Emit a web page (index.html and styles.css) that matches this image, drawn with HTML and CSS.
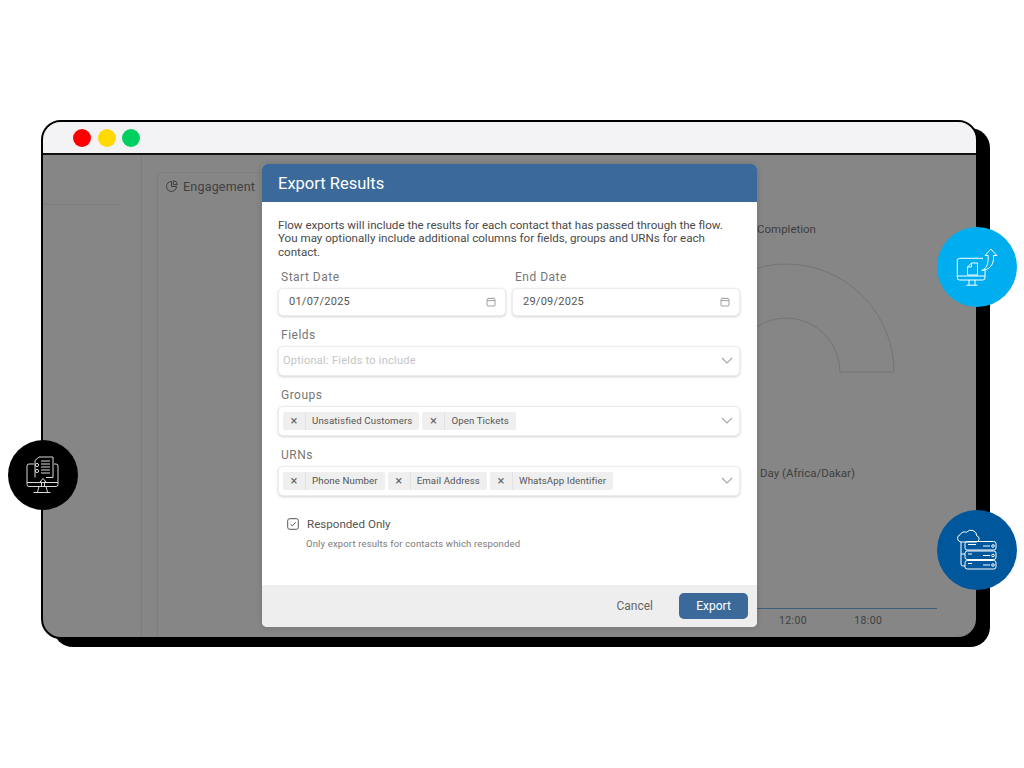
FILE: index.html
```html
<!DOCTYPE html>
<html lang="en">
<head>
<meta charset="UTF-8">
<meta name="viewport" content="width=device-width, initial-scale=1.0">
<title>Export Results</title>
<link rel="stylesheet" href="styles.css">
</head>
<body>
<div class="stage">
    <div class="window">
        <div class="titlebar">
            <span class="dot dot-red"></span>
            <span class="dot dot-yellow"></span>
            <span class="dot dot-green"></span>
        </div>
        <div class="screen">
            <div class="sidebar"><div class="sidebar-rule"></div></div>
            <div class="main">
                <div class="card">
                    <div class="tab">
                        <svg class="tab-icon" viewBox="0 0 12 12"><path d="M5.500 1.500a5 5 0 1 0 5 5h-5z"/><path d="M7.300 0.700a4.200 4.200 0 0 1 4 4h-4z"/></svg>
                        Engagement
                    </div>
                    <div class="chart">
                        <div class="chart-title">Completion</div>
                        <svg class="gauge" width="140" height="112" viewBox="0 0 140 112"><path d="M-79 111a108 108 0 0 1 216 0H83a54 54 0 0 0-108 0z"/></svg>
                        <div class="chart-sub">Day (Africa/Dakar)</div>
                        <div class="axis"></div>
                        <div class="ticks"><span>12:00</span><span>18:00</span></div>
                    </div>
                </div>
            </div>
        </div>
    </div>

    <div class="modal">
        <div class="modal-header">Export Results</div>
        <div class="modal-body">
            <p class="intro">Flow exports will include the results for each contact that has passed through the flow. You may optionally include additional columns for fields, groups and URNs for each contact.</p>
            <div class="date-row">
                <div class="field">
                    <label>Start Date</label>
                    <div class="control date-control">
                        <span>01/07/2025</span>
                        <svg class="cal" viewBox="0 0 10 10"><rect x="1" y="1.5" width="8" height="7.5" rx="1"/><path d="M1 3.6h8M3 .6v1.4M7 .6v1.4"/></svg>
                    </div>
                </div>
                <div class="field">
                    <label>End Date</label>
                    <div class="control date-control">
                        <span>29/09/2025</span>
                        <svg class="cal" viewBox="0 0 10 10"><rect x="1" y="1.5" width="8" height="7.5" rx="1"/><path d="M1 3.6h8M3 .6v1.4M7 .6v1.4"/></svg>
                    </div>
                </div>
            </div>
            <div class="field">
                <label>Fields</label>
                <div class="control select-control">
                    <span class="placeholder">Optional: Fields to include</span>
                    <svg class="chevron" viewBox="0 0 12 7"><path d="M1 1l5 5 5-5"/></svg>
                </div>
            </div>
            <div class="field">
                <label>Groups</label>
                <div class="control select-control">
                    <div class="chips">
                        <div class="chip"><span class="chip-x">&times;</span><span class="chip-text">Unsatisfied Customers</span></div>
                        <div class="chip"><span class="chip-x">&times;</span><span class="chip-text">Open Tickets</span></div>
                    </div>
                    <svg class="chevron" viewBox="0 0 12 7"><path d="M1 1l5 5 5-5"/></svg>
                </div>
            </div>
            <div class="field">
                <label>URNs</label>
                <div class="control select-control">
                    <div class="chips">
                        <div class="chip"><span class="chip-x">&times;</span><span class="chip-text">Phone Number</span></div>
                        <div class="chip"><span class="chip-x">&times;</span><span class="chip-text">Email Address</span></div>
                        <div class="chip"><span class="chip-x">&times;</span><span class="chip-text">WhatsApp Identifier</span></div>
                    </div>
                    <svg class="chevron" viewBox="0 0 12 7"><path d="M1 1l5 5 5-5"/></svg>
                </div>
            </div>
            <div class="check-row">
                <svg class="checkbox" viewBox="0 0 12 12"><rect x="0.7" y="0.7" width="10.6" height="10.6" rx="2"/><path d="M3.4 6l1.9 1.9 3.4-3.6"/></svg>
                <span>Responded Only</span>
            </div>
            <div class="check-help">Only export results for contacts which responded</div>
        </div>
        <div class="modal-footer">
            <span class="cancel">Cancel</span>
            <span class="btn">Export</span>
        </div>
    </div>

    <!-- floating badges -->
    <div class="badge badge-export">
        <svg viewBox="0 0 80 80">
            <path d="M46 31.3H22.5a2.2 2.2 0 0 0-2.2 2.2v17.3a2.2 2.2 0 0 0 2.2 2.2h23.3a2.2 2.2 0 0 0 2.2-2.2V42"/>
            <path d="M32 53v5M38 53v5M29.5 58.2h11M20.300 49h27.700"/>
            <path d="M34.500 36h6v12h-10v-8z"/>
            <path d="M34.500 36v4h-4"/>
            <path d="M44.700 43.500c4.500-1.500 6.500-6 6.500-12.500v-2.500h-3.200l5.900-6.400 6 6.400h-3.400v3c0 6.500-4.500 11.500-11.800 12z"/>
        </svg>
    </div>
    <div class="badge badge-servers">
        <svg viewBox="0 0 80 80">
            <path d="M26 32h-2a3.800 3.800 0 0 1-.8-7.400 4.800 4.800 0 0 1 6.300-2.300 5.800 5.800 0 0 1 10.300 3.600 3.100 3.100 0 0 1-.8 6.100z"/>
            <path d="M24 32v22a2 2 0 0 0 2 2h2M24 44h4"/>
            <rect x="28" y="31.500" width="31" height="8.500" rx="2.200"/>
            <rect x="28" y="41" width="31" height="8.500" rx="2.200"/>
            <rect x="28" y="50.500" width="31" height="8.500" rx="2.200"/>
            <path d="M31 34.500h8M46 36h7M31 44h4M46 45.500h7M31 53.500h4M46 55h7"/>
            <circle cx="56" cy="36" r="1.300"/>
            <circle cx="56" cy="45.500" r="1.300"/>
            <circle cx="56" cy="55" r="1.300"/>
        </svg>
    </div>
    <div class="badge badge-report">
        <svg viewBox="0 0 70 70">
            <path d="M26 24h-5a2 2 0 0 0-2 2v18.500a2 2 0 0 0 2 2h27a2 2 0 0 0 2-2V26a2 2 0 0 0-2-2h-2"/>
            <path d="M19 42.500h31M31 46.500l-1.500 5.500M38 46.500l1.500 5.500M25.500 52.500h17"/>
            <path d="M27 37.500V20.500l4-3.500h14v20.500H38"/>
            <path d="M33 21h9M33 24h9M33 27h9M33 30h9M33 33h9"/>
            <circle cx="29" cy="25" r="1.600"/>
            <circle cx="29" cy="31" r="1.600"/>
            <path d="M35 38.500l-3 3.500h1.500v4.500h3V42H38z"/>
        </svg>
    </div>
</div>
</body>
</html>
```

FILE: styles.css
```css
body {
    font-family: Roboto, "Liberation Sans", sans-serif;
    background-color: #fff;
    margin: 0;
    padding: 0;
}

.stage {
    position: relative;
    width: 1024px;
    height: 768px;
    overflow: hidden;
}

/* Browser window */
.window {
    position: absolute;
    left: 41px;
    top: 120px;
    width: 937px;
    height: 519px;
    box-sizing: border-box;
    display: flex;
    flex-direction: column;
    border: 2px solid #000;
    border-radius: 20px;
    box-shadow: 12px 8px 0 #000;
    background-color: #868686;
    overflow: hidden;
}

.titlebar {
    display: flex;
    align-items: center;
    gap: 6.500px;
    height: 31px;
    padding-left: 30px;
    background-color: #f3f3f6;
    border-bottom: 2px solid #111;
    flex-shrink: 0;
}

.dot {
    width: 18px;
    height: 18px;
    border-radius: 50%;
}

.dot-red { background-color: #ff0000; }
.dot-yellow { background-color: #ffd900; }
.dot-green { background-color: #00d060; }

.screen {
    display: flex;
    flex: 1;
    min-height: 0;
}

.sidebar {
    width: 98px;
    flex-shrink: 0;
    padding-top: 49px;
    border-right: 1px solid #7c7c7c;
}

.sidebar-rule {
    width: 77px;
    height: 1px;
    background-color: #7e7e7e;
}

.main {
    flex: 1;
    padding: 18px 0 0 15px;
}

.card {
    display: flex;
    height: 100%;
    border-left: 1px solid #7c7c7c;
    border-radius: 4px 0 0 0;
    box-sizing: border-box;
}

.tab {
    display: flex;
    align-items: flex-start;
    gap: 5px;
    width: 591px;
    padding: 6px 0 0 8px;
    flex-shrink: 0;
    border-top: 1px solid #7f7f7f;
    margin-top: -1px;
    font-size: 12.500px;
    line-height: 15px;
    letter-spacing: 0.2px;
    color: #3f3f3f;
}

.tab-icon {
    width: 12px;
    height: 12px;
    margin-top: 1px;
    fill: none;
    stroke: #3f3f3f;
    stroke-width: 1;
}

.chart {
    flex: 1;
    padding-top: 49px;
    color: #404040;
}

.chart-title {
    font-size: 11.500px;
    line-height: 14px;
}

.gauge {
    display: block;
    margin-top: 25px;
    fill: none;
    stroke: #747474;
    stroke-width: 1;
    overflow: hidden;
}

.chart-sub {
    margin: 93px 0 0 3px;
    font-size: 11.500px;
    line-height: 14px;
}

.axis {
    width: 180px;
    height: 1px;
    margin-top: 128px;
    background-color: #3d5f7c;
}

.ticks {
    display: flex;
    gap: 47px;
    margin: 6px 0 0 22px;
    font-size: 10.500px;
    line-height: 12px;
    letter-spacing: 0.4px;
}

/* Dialog */
.modal {
    position: absolute;
    left: 262px;
    top: 164px;
    width: 495px;
    height: 463px;
    display: flex;
    flex-direction: column;
    background-color: #fff;
    border-radius: 5px;
    overflow: hidden;
    box-shadow: 0 0 6px rgba(0, 0, 0, 0.15);
}

.modal-header {
    height: 38px;
    flex-shrink: 0;
    padding-left: 16px;
    box-sizing: border-box;
    background-color: #3b6a9a;
    color: #fff;
    font-size: 16.500px;
    line-height: 39px;
}

.modal-body {
    flex: 1;
    padding: 17px 17px 0 16px;
}

.intro {
    margin: 0;
    font-size: 11.600px;
    line-height: 13.330px;
    color: #4a4a4a;
}

.date-row {
    display: flex;
    gap: 6px;
}

.date-row .field {
    flex: 1;
    margin-top: 10px;
}

.field {
    margin-top: 11px;
}

.field label {
    display: block;
    margin: 0 0 3px 3px;
    font-size: 12px;
    line-height: 16px;
    letter-spacing: 0.5px;
    color: #777;
}

.control {
    display: flex;
    align-items: center;
    justify-content: space-between;
    box-sizing: border-box;
    height: 30px;
    background-color: #fff;
    border: 1px solid #ececec;
    border-radius: 5px;
    box-shadow: 0 1px 3px rgba(0, 0, 0, 0.18);
}

.date-control {
    height: 28px;
    padding: 0 9px 0 10px;
    font-size: 11px;
    letter-spacing: 0.25px;
    color: #555;
}

.select-control {
    padding: 0 6px 0 4px;
}

.cal {
    width: 10px;
    height: 10px;
    fill: none;
    stroke: #a0a0a0;
    stroke-width: 1;
}

.chevron {
    width: 12px;
    height: 7px;
    fill: none;
    stroke: #a8a8a8;
    stroke-width: 1.200;
}

.placeholder {
    font-size: 11px;
    letter-spacing: 0.25px;
    color: #c4c4c4;
}

.chips {
    display: flex;
    gap: 3px;
}

.chip {
    display: flex;
    height: 18px;
    background-color: #efefef;
    border-radius: 2px;
    font-size: 9.700px;
    line-height: 18px;
    color: #555;
}

.chip-x {
    width: 23px;
    box-sizing: border-box;
    text-align: center;
    border-right: 1px solid #e2e2e2;
    font-size: 13px;
    color: #666;
}

.chip-text {
    padding: 0 7px 0 6px;
    letter-spacing: 0.1px;
}

.check-row {
    display: flex;
    align-items: center;
    gap: 8px;
    margin: 20px 0 0 9px;
    font-size: 11.600px;
    line-height: 16px;
    color: #555;
}

.checkbox {
    width: 12px;
    height: 12px;
    fill: none;
    stroke: #555;
    stroke-width: 1;
}

.check-help {
    margin: 6px 0 0 28px;
    font-size: 9.500px;
    line-height: 12px;
    letter-spacing: 0.15px;
    color: #7a7a7a;
}

.modal-footer {
    display: flex;
    align-items: center;
    justify-content: flex-end;
    gap: 26px;
    height: 42px;
    flex-shrink: 0;
    padding-right: 9px;
    background-color: #eee;
    font-size: 12px;
}

.cancel {
    color: #666;
}

.btn {
    width: 69px;
    height: 26px;
    line-height: 26px;
    text-align: center;
    background-color: #3b6a9a;
    color: #fff;
    border-radius: 5px;
}

/* Floating badges */
.badge {
    position: absolute;
    border-radius: 50%;
}

.badge svg {
    display: block;
    width: 100%;
    height: 100%;
    fill: none;
    stroke: #fff;
    stroke-width: 1;
}

.badge-export {
    left: 937px;
    top: 227px;
    width: 80px;
    height: 80px;
    background-color: #00aeef;
}

.badge-servers {
    left: 937px;
    top: 510px;
    width: 80px;
    height: 80px;
    background-color: #00579c;
}

.badge-report {
    left: 8px;
    top: 440px;
    width: 70px;
    height: 70px;
    background-color: #000;
}

.badge-report svg {
    stroke: #d8d8d8;
}
```
